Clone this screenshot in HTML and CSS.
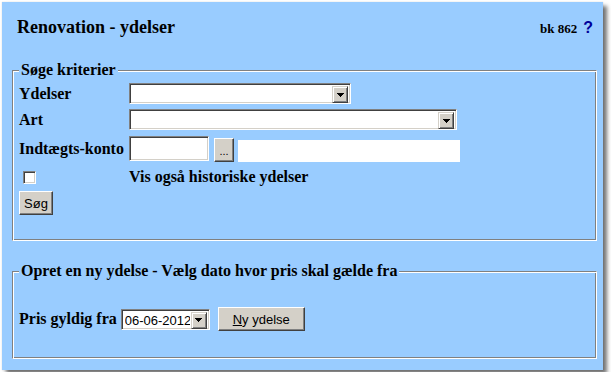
FILE: index.html
```html
<!DOCTYPE html>
<html lang="da">
<head>
  <meta charset="UTF-8" />
  <title>Renovation - ydelser</title>
  <link rel="stylesheet" href="styles.css">
</head>
<body>
  <div class="window">
    <div class="title-row">
      <h1>Renovation - ydelser</h1>
      <span class="bk">bk 862<a class="help" href="#">?</a></span>
    </div>

    <fieldset class="box box-search">
      <legend>Søge kriterier</legend>
      <div class="row row-combo">
        <label class="lbl">Ydelser</label>
        <span class="combo combo-ydelser">
          <select></select>
          <span class="drop"><svg width="7" height="4" viewBox="0 0 7 4"><polygon points="0,0 7,0 3.5,4" fill="#000"/></svg></span>
        </span>
      </div>
      <div class="row row-combo row-art">
        <label class="lbl">Art</label>
        <span class="combo combo-art">
          <select></select>
          <span class="drop"><svg width="7" height="4" viewBox="0 0 7 4"><polygon points="0,0 7,0 3.5,4" fill="#000"/></svg></span>
        </span>
      </div>
      <div class="row row-konto">
        <label class="lbl">Indtægts-konto</label>
        <input class="text text-konto" type="text">
        <button class="btn btn-dots">...</button>
        <input class="text-readonly" type="text" readonly>
      </div>
      <div class="row row-check">
        <span class="lbl"><input class="check" type="checkbox"></span>
        <span>Vis også historiske ydelser</span>
      </div>
      <div class="row row-search">
        <button class="btn btn-search">Søg</button>
      </div>
    </fieldset>

    <fieldset class="box box-create">
      <legend>Opret en ny ydelse - Vælg dato hvor pris skal gælde fra</legend>
      <div class="row row-date">
        <label>Pris gyldig fra</label>
        <span class="combo combo-date">
          <select><option>06-06-2012</option></select>
          <span class="drop"><svg width="7" height="4" viewBox="0 0 7 4"><polygon points="0,0 7,0 3.5,4" fill="#000"/></svg></span>
        </span>
        <button class="btn btn-new"><u>N</u>y ydelse</button>
      </div>
    </fieldset>
  </div>
</body>
</html>
```

FILE: styles.css
```css
* { box-sizing: border-box; margin: 0; padding: 0; }
body {
  background: #fff;
  font-family: "Liberation Serif", "Times New Roman", serif;
  font-weight: bold;
  font-size: 16px;
  color: #000;
}

.window {
  width: 601px;
  height: 368px;
  margin: 2px;
  padding: 15px 6px 0 10px;
  background: #99ccff;
  box-shadow: 4px 4px 4px rgba(0,0,0,0.55), 0 0 1px rgba(0,0,0,0.2);
}

.title-row {
  display: flex;
  justify-content: space-between;
  align-items: baseline;
  height: 20px;
  padding: 0 4px 0 5px;
}
.title-row h1 {
  font-size: 18px;
  line-height: 20px;
}
.bk {
  font-size: 13px;
}
.help {
  margin-left: 6px;
  font-family: "Liberation Sans", Arial, sans-serif;
  font-size: 16px;
  color: #000099;
  text-decoration: none;
}

/* fieldsets */
.box {
  border: 1px solid;
  border-color: #808080 #fff #fff #808080;
  box-shadow: inset 1px 1px #fff, inset -1px -1px #808080;
  padding: 0 6px 25px 6px;
  min-width: 0;
}
.box legend {
  padding: 0 2px;
  line-height: 18px;
  background: #99ccff;
}
.box-search { margin-top: 24px; }
.box-create { margin-top: 21px; padding-bottom: 27px; }

.row {
  display: flex;
  align-items: center;
  line-height: 18px;
}
.lbl {
  width: 110px;
  flex: none;
}
.row-combo { margin-top: 4px; height: 21px; }
.row-art { margin-top: 5px; }
.row-konto {
  margin-top: 6px;
  height: 26px;
  align-items: flex-end;
}
.row-konto .lbl { align-self: center; }
.row-check { margin-top: 6px; height: 18px; }
.row-search { margin-top: 5px; }
.row-date { margin-top: 27px; height: 24px; }

/* windows classic controls */
.combo {
  display: flex;
  height: 21px;
  padding: 2px;
  background: #fff;
  border: 1px solid;
  border-color: #808080 #fff #fff #808080;
  box-shadow: inset 1px 1px #404040, inset -1px -1px #d4d0c8;
}
.combo select {
  flex: 1;
  min-width: 0;
  height: 17px;
  padding: 0 1px;
  border: 0;
  outline: 0;
  background: transparent;
  appearance: none;
  -webkit-appearance: none;
  font-family: "Liberation Sans", Arial, sans-serif;
  font-weight: normal;
  font-size: 13px;
  color: #000;
}
.drop {
  display: flex;
  align-items: center;
  justify-content: center;
  width: 16px;
  height: 17px;
  flex: none;
  background: #d4d0c8;
  border: 1px solid;
  border-color: #d4d0c8 #404040 #404040 #d4d0c8;
  box-shadow: inset 1px 1px #fff, inset -1px -1px #808080;
}
.drop svg { display: block; shape-rendering: crispEdges; }
.combo-ydelser { width: 222px; }
.combo-art { width: 328px; }
.combo-date { width: 89px; margin-left: 4px; }

.text {
  height: 25px;
  background: #fff;
  border: 1px solid;
  border-color: #808080 #fff #fff #808080;
  box-shadow: inset 1px 1px #404040, inset -1px -1px #d4d0c8;
  outline: 0;
}
.text-konto {
  width: 80px;
  align-self: flex-start;
}
.text-readonly {
  width: 222px;
  height: 22px;
  margin-left: 4px;
  border: 0;
  outline: 0;
  background: #fff;
}

.btn {
  height: 24px;
  background: #d4d0c8;
  border: 1px solid;
  border-color: #fff #404040 #404040 #fff;
  box-shadow: inset -1px -1px #808080, inset 1px 1px #d4d0c8;
  font-family: "Liberation Sans", Arial, sans-serif;
  font-weight: normal;
  font-size: 13px;
  color: #000;
}
.btn-dots {
  width: 20px;
  margin-left: 5px;
  font-size: 11px;
  padding-top: 2px;
}
.btn-search { width: 34px; }
.btn-new { width: 87px; margin-left: 8px; }

.check {
  display: block;
  width: 13px;
  height: 13px;
  margin-left: 4px;
  appearance: none;
  -webkit-appearance: none;
  background: #fff;
  border: 1px solid;
  border-color: #808080 #fff #fff #808080;
  box-shadow: inset 1px 1px #404040, inset -1px -1px #d4d0c8;
}
```
